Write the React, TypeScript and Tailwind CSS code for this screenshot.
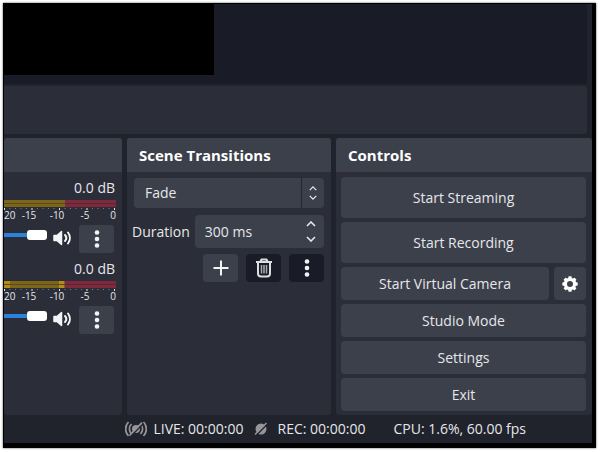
import React, { useState } from "react";

function Dots() {
  return (
    <svg width="6" height="20" viewBox="0 0 6 20" fill="#f4f4f6" aria-hidden="true">
      <circle cx="3" cy="3.5" r="2.3" />
      <circle cx="3" cy="10" r="2.3" />
      <circle cx="3" cy="16.5" r="2.3" />
    </svg>
  );
}

function Speaker() {
  return (
    <svg width="20" height="16" viewBox="0 0 20 16" fill="none" stroke="#f4f4f6" strokeWidth="2" strokeLinecap="round" aria-hidden="true">
      <path d="M2 5.500h3L9.500 1.500v13L5 10.500h-3z" fill="#f4f4f6" strokeWidth="1.500" strokeLinejoin="round" />
      <path d="M13 5a4.500 4.500 0 0 1 0 6" />
      <path d="M16 2.500a9 9 0 0 1 0 11" />
    </svg>
  );
}

function Chevron({ up = false, small = false }: { up?: boolean; small?: boolean }) {
  return (
    <svg width={small ? 8 : 10} height={small ? 5 : 6} viewBox="0 0 10 6" fill="none" stroke="#e6e7ea" strokeWidth="1.6" aria-hidden="true">
      <path d={up ? "M1 5l4-4 4 4" : "M1 1l4 4 4-4"} />
    </svg>
  );
}

function Trash() {
  return (
    <svg width="18" height="20" viewBox="0 0 18 20" fill="none" stroke="#dcdde2" strokeWidth="2" aria-hidden="true">
      <path d="M1 4h16M5.500 3.500L6.500 1.500h5l1 2" />
      <path d="M3 4.500v11q0 3 3 3h6q3 0 3-3v-11" />
      <path d="M6.500 7v8.500M9 7v8.500M11.500 7v8.500" strokeWidth="1.500" stroke="#a9abb3" />
    </svg>
  );
}

function Gear() {
  const teeth = [0, 45, 90, 135, 180, 225, 270, 315];
  return (
    <svg width="16" height="16" viewBox="0 0 16 16" aria-hidden="true">
      <circle cx="8" cy="8" r="4.600" fill="none" stroke="#fff" strokeWidth="3.200" />
      {teeth.map((a) => (
        <rect key={a} x="6.300" y="0.300" width="3.400" height="3" rx="0.800" fill="#fff" transform={`rotate(${a} 8 8)`} />
      ))}
    </svg>
  );
}

function LiveIcon() {
  return (
    <svg width="22" height="18" viewBox="0 0 22 18" fill="none" stroke="#96969a" strokeWidth="1.700" aria-hidden="true">
      <circle cx="11" cy="9" r="4" fill="#96969a" stroke="none" />
      <path d="M6.500 4a7 7 0 0 0 0 10M15.500 4a7 7 0 0 1 0 10M3.500 2a10 10 0 0 0 0 14M18.500 2a10 10 0 0 1 0 14" />
      <path d="M6 16L18.500 3.500" stroke="#20222c" strokeWidth="1.500" />
      <path d="M4.500 15.500L17 2.500" strokeWidth="1.800" />
    </svg>
  );
}

function RecIcon() {
  return (
    <svg width="14" height="14" viewBox="0 0 14 14" aria-hidden="true">
      <circle cx="7" cy="7" r="5.500" fill="#96969a" />
      <path d="M2 13.500L13.500 2" stroke="#20222c" strokeWidth="1.500" />
      <path d="M1 12.500L12.500 1" stroke="#96969a" strokeWidth="1.500" />
    </svg>
  );
}

function Meter({ peaks = false }: { peaks?: boolean }) {
  const ticks = Array.from({ length: 21 }, (_, i) => i);
  return (
    <svg className="block w-28 shrink-0" height="10" viewBox="0 0 112 10" aria-hidden="true">
      {[0, 4].map((y) => (
        <g key={y}>
          <rect x="0" y={y} width="61" height="3" fill="#7d6618" />
          <rect x="61" y={y} width="51" height="3" fill="#7e2a3c" />
          {peaks && <rect x="0" y={y} width="6" height="3" fill="#b48d18" />}
          {peaks && <rect x="55" y={y} width="5" height="3" fill="#b48d18" />}
        </g>
      ))}
      <rect x="0" y="3" width="61" height="1" fill="#574a20" />
      <rect x="61" y="3" width="51" height="1" fill="#5a2535" />
      {ticks.map((i) => (
        <rect key={i} x={110 - i * 5.5} y="8" width="1" height={i % 5 === 0 ? 2 : 1} fill={i % 5 === 0 ? "#e6e7ea" : "#7d7f88"} />
      ))}
    </svg>
  );
}

function Channel({ name, peaks }: { name: string; peaks?: boolean }) {
  return (
    <section aria-label={name} className="flex h-[81px] flex-col">
      <output className="h-5 pr-[7px] text-right text-sm leading-5">0.0 dB</output>
      <div className="mt-[2px] flex justify-end pr-[6px]">
        <Meter peaks={peaks} />
      </div>
      <div className="-mr-[5px] flex h-[10px] text-[10px] leading-[10px]">
        <span className="min-w-0 flex-1">20</span>
        {["-15", "-10", "-5", "0"].map((t) => (
          <span key={t} className="w-7 shrink-0 text-center">{t}</span>
        ))}
      </div>
      <div className="mt-[5px] flex items-center justify-end pr-2">
        <input
          type="range"
          aria-label={`${name} volume`}
          defaultValue={100}
          className="mb-[8px] h-[10px] min-w-0 flex-1 appearance-none bg-transparent [&::-webkit-slider-runnable-track]:h-1 [&::-webkit-slider-runnable-track]:bg-[#2a82da] [&::-webkit-slider-thumb]:-mt-[3px] [&::-webkit-slider-thumb]:h-[10px] [&::-webkit-slider-thumb]:w-5 [&::-webkit-slider-thumb]:appearance-none [&::-webkit-slider-thumb]:rounded-[3px] [&::-webkit-slider-thumb]:bg-white"
        />
        <button aria-label={`Mute ${name}`} className="mb-[2px] ml-[5px]"><Speaker /></button>
        <button aria-label={`${name} options`} className="ml-[7px] flex h-7 w-[35px] items-center justify-center rounded-[3px] bg-[#3c404b]"><Dots /></button>
      </div>
    </section>
  );
}

function Dock({ title, size, children }: { title?: string; size: string; children: React.ReactNode }) {
  return (
    <section className={`flex min-w-0 flex-col overflow-hidden rounded-[3px] bg-[#2b2d38] ${size}`}>
      <h2 className="h-[34px] shrink-0 bg-[#3c404b] px-3 text-[15px] leading-[34px] font-bold whitespace-nowrap text-white">{title}</h2>
      {children}
    </section>
  );
}

function ControlButton({ tall, children }: { tall?: boolean; children: React.ReactNode }) {
  return (
    <button className={`min-w-0 flex-1 rounded-[4px] bg-[#3c404b] text-sm leading-5 ${tall ? "h-[41px]" : "h-[33px]"}`}>
      {children}
    </button>
  );
}

export default function App() {
  const [duration, setDuration] = useState(300);
  return (
    <div className="bg-white p-[3px] pb-1 font-['Open_Sans','Noto_Sans',sans-serif] text-[#e6e7ea]">
      <main className="mr-px flex flex-col overflow-hidden border-t border-r-4 border-b-[5px] border-l border-black bg-[#20222c] shadow-[0_0_2px_#555]">
        <div className="mr-[5px] h-20 bg-[#191b26]">
          <div className="h-[71px] w-[36%] bg-black" />
        </div>
        <div className="mt-[2px] mr-[5px] h-12 rounded-r-[3px] bg-[#2b2d38]" />

        <div className="mt-1 flex gap-[5px]">
          <Dock size="flex-[118_1_0%]">
            <div className="flex flex-col pt-[6px]">
              <Channel name="Desktop Audio" />
              <Channel name="Mic" peaks />
            </div>
          </Dock>

          <Dock title="Scene Transitions" size="flex-[204_1_0%]">
            <div className="flex flex-col pt-[6px] pr-[7px] pl-[5px]">
              <div className="relative ml-[2px] flex h-[30px] rounded-[4px] bg-[#3c404b]">
                <select aria-label="Transition" className="w-full appearance-none bg-transparent pl-[11px] text-sm">
                  <option>Fade</option>
                </select>
                <span className="pointer-events-none absolute inset-y-0 right-0 flex w-[23px] flex-col items-center justify-center gap-1 border-l border-[#242631]">
                  <Chevron up small />
                  <Chevron small />
                </span>
              </div>
              <div className="mt-[7px] flex items-center gap-[5px]">
                <label htmlFor="duration" className="shrink-0 text-sm leading-5">Duration</label>
                <div className="flex h-[33px] min-w-0 flex-1 items-center rounded-[4px] bg-[#3c404b] pr-2 pl-[10px]">
                  <input id="duration" readOnly value={`${duration} ms`} className="w-full min-w-0 flex-1 bg-transparent text-sm outline-none" />
                  <div className="flex flex-col gap-[9px]">
                    <button aria-label="Increase duration" onClick={() => setDuration(duration + 50)}><Chevron up /></button>
                    <button aria-label="Decrease duration" onClick={() => setDuration(duration - 50)}><Chevron /></button>
                  </div>
                </div>
              </div>
              <div className="mt-[6px] flex justify-end gap-2">
                <button aria-label="Add transition" className="flex h-7 w-[35px] items-center justify-center rounded-[4px] bg-[#3c404b]">
                  <svg width="16" height="16" viewBox="0 0 16 16" stroke="#f4f4f6" strokeWidth="2" aria-hidden="true"><path d="M8 0.500v15M0.500 8h15" /></svg>
                </button>
                <button aria-label="Remove transition" className="flex h-7 w-[35px] items-center justify-center rounded-[4px] bg-[#191b26]"><Trash /></button>
                <button aria-label="Transition options" className="flex h-7 w-[35px] items-center justify-center rounded-[4px] bg-[#191b26]"><Dots /></button>
              </div>
            </div>
          </Dock>

          <Dock title="Controls" size="flex-[256_1_0%]">
            <div className="flex flex-col gap-1 pt-[5px] pr-[6px] pb-1 pl-[5px]">
              <div className="flex"><ControlButton tall>Start Streaming</ControlButton></div>
              <div className="flex"><ControlButton tall>Start Recording</ControlButton></div>
              <div className="flex gap-[5px]">
                <ControlButton>Start Virtual Camera</ControlButton>
                <button aria-label="Virtual camera settings" className="flex h-[33px] w-8 items-center justify-center rounded-[4px] bg-[#3c404b]"><Gear /></button>
              </div>
              <div className="flex"><ControlButton>Studio Mode</ControlButton></div>
              <div className="flex"><ControlButton>Settings</ControlButton></div>
              <div className="flex"><ControlButton>Exit</ControlButton></div>
            </div>
          </Dock>
        </div>

        <footer className="flex h-7 items-center justify-end pr-[66px] text-sm leading-5 whitespace-nowrap">
          <LiveIcon />
          <span className="ml-[6px]">LIVE: 00:00:00</span>
          <span className="ml-[10px]"><RecIcon /></span>
          <span className="ml-[10px]">REC: 00:00:00</span>
          <span className="ml-7">CPU: 1.6%, 60.00 fps</span>
        </footer>
      </main>
    </div>
  );
}
